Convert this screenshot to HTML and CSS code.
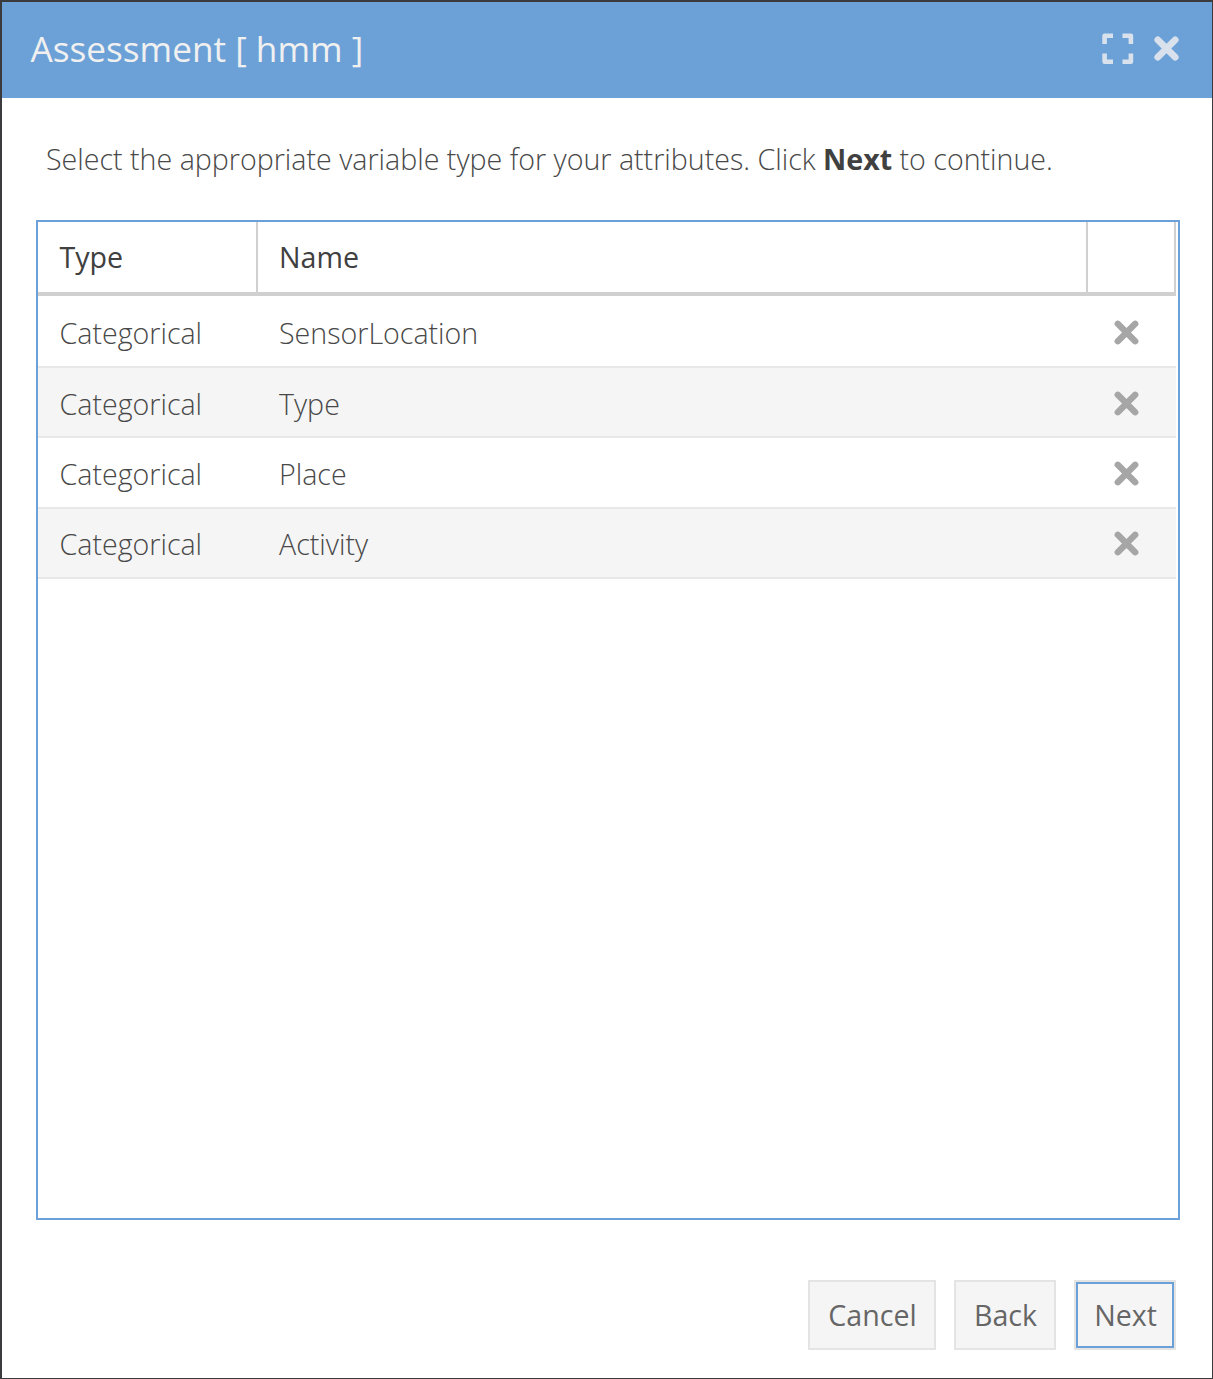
FILE: index.html
```html
<!DOCTYPE html>
<html lang="en">
<head>
<meta charset="utf-8">
<title>Assessment</title>
<link rel="stylesheet" href="styles.css">
</head>
<body>
<svg width="0" height="0" class="defs">
  <symbol id="times" viewBox="0 0 25 25">
    <path d="M3.8 3.8l17.4 17.4M21.2 3.8L3.8 21.2"/>
  </symbol>
</svg>
<div class="dialog">
  <header class="titlebar">
    <h1 class="title">Assessment [ hmm ]</h1>
    <svg class="expand" viewBox="0 0 32 32"><path d="M2.6 11V2.8h8.4M20.5 2.8h8.4V11M28.9 20.4v8.3h-8.4M11 28.7H2.6v-8.3"/></svg>
    <svg class="close"><use href="#times"/></svg>
  </header>
  <p class="hint">Select the appropriate variable type for your attributes. Click <b>Next</b> to continue.</p>
  <div class="grid">
    <div class="head">
      <div class="th type">Type</div>
      <div class="th name">Name</div>
      <div class="th action"></div>
    </div>
    <div class="rows">
      <div class="row"><div class="type">Categorical</div><div class="name">SensorLocation</div><div class="action"><svg class="remove"><use href="#times"/></svg></div></div>
      <div class="row"><div class="type">Categorical</div><div class="name">Type</div><div class="action"><svg class="remove"><use href="#times"/></svg></div></div>
      <div class="row"><div class="type">Categorical</div><div class="name">Place</div><div class="action"><svg class="remove"><use href="#times"/></svg></div></div>
      <div class="row"><div class="type">Categorical</div><div class="name">Activity</div><div class="action"><svg class="remove"><use href="#times"/></svg></div></div>
    </div>
  </div>
  <footer class="buttons">
    <button class="btn cancel">Cancel</button>
    <button class="btn">Back</button>
    <button class="btn focused">Next</button>
  </footer>
</div>
</body>
</html>
```
FILE: styles.css
```css
* { box-sizing: border-box; }
body { margin: 0; font-family: "Open Sans", sans-serif; font-size: 28.6px; font-weight: 300; color: #484848; background: #fff; }
.defs { display: none; }
.dialog { height: 1379px; border: 2px solid #3b3b3d; border-right-width: 1px; border-bottom-width: 1px; display: flex; flex-direction: column; }
.titlebar { height: 96px; flex: none; background: #6ca1d8; display: flex; align-items: center; padding: 0 33.5px 3px 28.5px; }
.title { margin: 0; flex: 1; padding-bottom: 2px; font-size: 35.2px; font-weight: 400; color: #f0f0f0; }
.expand { width: 32px; height: 32px; margin-right: 20px; fill: none; stroke: #d8e1ec; stroke-width: 4.6; stroke-linejoin: round; }
.close { width: 25px; height: 25px; fill: none; stroke: #d8e1ec; stroke-width: 6.8; stroke-linecap: round; }
.hint { margin: 41px 0 0 44px; line-height: 40px; height: 81px; flex: none; white-space: nowrap; }
.hint b { font-weight: 700; color: #404040; }
.grid { height: 1000px; flex: none; margin: 0 32px 0 34px; border: 2px solid #6ca1d8; padding-right: 2px; }
.head { display: flex; height: 74px; border-bottom: 4px solid #d0d0d0; font-weight: 400; color: #404040; }
.th { border-right: 2px solid #d0d0d0; padding-top: 15px; line-height: 40px; }
.type { width: 220px; padding-left: 21.5px; }
.name { flex: 1; padding-left: 21px; }
.action { width: 88px; }
.rows { padding-top: 1.6px; }
.row { display: flex; align-items: center; height: 70.4px; padding-top: 2px; border-bottom: 2px solid #e8e8e8; }
.row:nth-child(even) { background: #f5f5f5; }
.row .action { display: flex; padding-left: 26px; }
.remove { width: 25px; height: 25px; fill: none; stroke: #a6a6a6; stroke-width: 6.4; stroke-linecap: round; }
.buttons { display: flex; justify-content: flex-end; gap: 18px; padding: 60px 36px 0 0; }
.btn { width: 102px; height: 70px; padding: 0 0 2px 1px; border: 2px solid #e4e4e4; background: #f5f5f5; color: #666; font: 400 28.6px "Open Sans", sans-serif; }
.cancel { width: 128px; }
.focused { box-shadow: inset 0 0 0 2px #6ca1d8; }
```
